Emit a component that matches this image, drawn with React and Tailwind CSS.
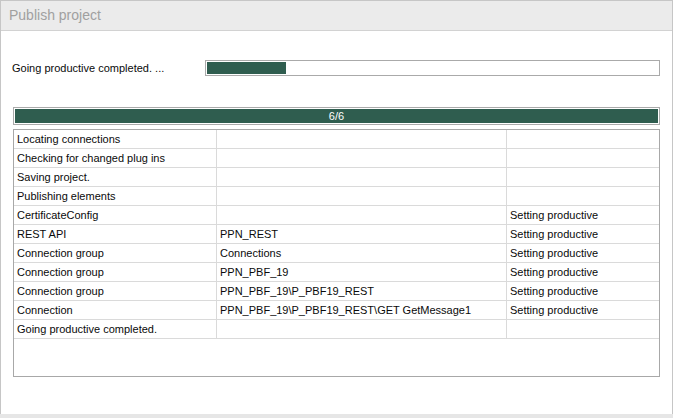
const rows = [
  ["Locating connections", "", ""],
  ["Checking for changed plug ins", "", ""],
  ["Saving project.", "", ""],
  ["Publishing elements", "", ""],
  ["CertificateConfig", "", "Setting productive"],
  ["REST API", "PPN_REST", "Setting productive"],
  ["Connection group", "Connections", "Setting productive"],
  ["Connection group", "PPN_PBF_19", "Setting productive"],
  ["Connection group", "PPN_PBF_19\\P_PBF19_REST", "Setting productive"],
  ["Connection", "PPN_PBF_19\\P_PBF19_REST\\GET GetMessage1", "Setting productive"],
  ["Going productive completed.", "", ""],
];

export default function App() {
  return (
    <div className="w-[673px] h-[418px] bg-[#e6e6e6] font-['Liberation_Sans',Arial,sans-serif] text-[11px] text-[#0a0a0a]">
      <div className="h-[414px] border-t border-l border-r border-[#c6c6c6] bg-white flex flex-col">
        {/* Title bar */}
        <div className="h-[30px] shrink-0 bg-[#ebebeb] border-b border-[#d2d2d2] pl-[8px] flex items-center text-[14px] text-[#a0a0a0]">
          Publish project
        </div>

        <div className="px-[12px] flex flex-col">
          {/* Current step */}
          <div className="mt-[29px] flex items-center h-[16px]">
            <div className="w-[193px] shrink-0 -ml-px">Going productive completed. ...</div>
            <div className="flex-1 h-[16px] border border-[#aaaaaa] p-px bg-white">
              <div className="h-full w-[79px] bg-[#2f5d4f]" />
            </div>
          </div>

          {/* Overall progress */}
          <div className="mt-[31px] h-[18px] border border-[#aaaaaa] p-px bg-white">
            <div className="h-full bg-[#2f5d4f] flex items-center justify-center text-white leading-none">
              6/6
            </div>
          </div>

          {/* Log table */}
          <div className="mt-[4px] h-[248px] border border-[#a8a8a8] bg-white flex flex-col">
            {rows.map((r, i) => (
              <div key={i} className="flex h-[19px] border-b border-[#dadada]">
                <div className="w-[203px] shrink-0 border-r border-[#dadada] pl-[3px] flex items-center whitespace-nowrap">
                  {r[0]}
                </div>
                <div className="w-[290px] shrink-0 border-r border-[#dadada] pl-[3px] flex items-center whitespace-nowrap">
                  {r[1]}
                </div>
                <div className="flex-1 pl-[3px] flex items-center whitespace-nowrap">{r[2]}</div>
              </div>
            ))}
          </div>
        </div>
      </div>
    </div>
  );
}
